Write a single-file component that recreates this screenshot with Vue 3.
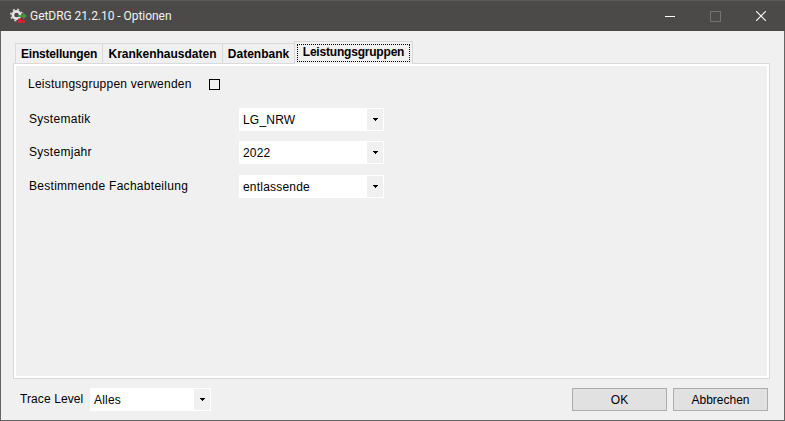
<script setup>
const tabs = [
  { label: 'Einstellungen', width: 87, tight: true },
  { label: 'Krankenhausdaten', width: 120, tight: false },
  { label: 'Datenbank', width: 72, tight: false },
]
const rows = [
  { label: 'Systematik', value: 'LG_NRW' },
  { label: 'Systemjahr', value: '2022' },
  { label: 'Bestimmende Fachabteilung', value: 'entlassende' },
]
</script>

<template>
  <div class="window">
    <header class="titlebar">
      <svg class="appicon" width="20" height="20" viewBox="0 0 20 20">
        <circle cx="6.5" cy="9" r="3.6" fill="none" stroke="#e4e4e4" stroke-width="2.6" />
        <circle cx="6.5" cy="9" r="5.6" fill="none" stroke="#d0d0d0" stroke-width="1.8" stroke-dasharray="2 2.4" />
        <path d="M8 9h5V6.5l4 3.5-4 3.2V11H8z" fill="#3f9a3c" />
        <path d="M8 14h7v3H8z" fill="#c8282c" />
        <path d="M8 12.5h3V14H8z" fill="#c8282c" />
      </svg>
      <span class="title">GetDRG 21.2.10 - Optionen</span>
      <div class="controls">
        <span class="ctl"><i class="min"></i></span>
        <span class="ctl"><i class="max"></i></span>
        <span class="ctl">
          <svg width="10" height="10" viewBox="0 0 10 10"><path d="M0 0l10 10M10 0L0 10" stroke="#fff" stroke-width="1.1" fill="none" /></svg>
        </span>
      </div>
    </header>

    <main class="body">
      <div class="tabs">
        <div
          v-for="t in tabs"
          :key="t.label"
          class="tab"
          :class="{ tight: t.tight }"
          :style="{ width: t.width + 'px' }"
        >{{ t.label }}</div>
        <div class="tab active"><span class="focus">Leistungsgruppen</span></div>
      </div>

      <section class="panel">
        <div class="check-row">
          <span class="check-label">Leistungsgruppen verwenden</span>
          <span class="checkbox"></span>
        </div>
        <div v-for="r in rows" :key="r.label" class="form-row">
          <span class="label">{{ r.label }}</span>
          <div class="select wide">
            <span class="val">{{ r.value }}</span>
            <span class="arrow">
              <svg width="5" height="3" viewBox="0 0 5 3" shape-rendering="crispEdges"><path d="M0 0h5v1H4v1H3v1H2V2H1V1H0z" fill="#000" /></svg>
            </span>
          </div>
        </div>
      </section>

      <footer class="footer">
        <span class="trace">Trace Level</span>
        <div class="select narrow">
          <span class="val">Alles</span>
          <span class="arrow">
            <svg width="5" height="3" viewBox="0 0 5 3" shape-rendering="crispEdges"><path d="M0 0h5v1H4v1H3v1H2V2H1V1H0z" fill="#000" /></svg>
          </span>
        </div>
        <div class="buttons">
          <button class="btn">OK</button>
          <button class="btn">Abbrechen</button>
        </div>
      </footer>
    </main>
  </div>
</template>

<style>
html, body { margin: 0; padding: 0; background: #f0f0f0; overflow: hidden; }
</style>

<style scoped>
.window {
  width: 785px;
  height: 421px;
  box-sizing: border-box;
  display: flex;
  flex-direction: column;
  border: 1px solid #646464;
  border-top: 0;
  background: #f0f0f0;
  font-family: "Liberation Sans", Arial, sans-serif;
  font-size: 12px;
  color: #000;
}
.titlebar {
  height: 31px;
  margin: 0 -1px;
  flex: none;
  display: flex;
  align-items: center;
  background: #4c4a48;
  border-top: 1px solid #5a5a5a;
  box-sizing: border-box;
  padding-left: 10px;
  color: #fff;
}
.appicon { flex: none; }
.title { font-family: Roboto, "Liberation Sans", sans-serif; font-size: 12px; color: #f2f2f2; letter-spacing: -.04px; }
.controls { margin-left: auto; margin-right: 1px; display: flex; height: 100%; }
.ctl { width: 46px; display: flex; align-items: center; justify-content: center; }
.min { width: 10px; height: 1px; background: #fff; display: block; margin-left: 2px; }
.max { width: 9px; height: 9px; border: 1px solid #757371; display: block; }
.body { flex: 1; display: flex; flex-direction: column; padding: 10px 14px 0 12px; min-height: 0; }
.tabs { display: flex; align-items: flex-end; height: 23px; padding-left: 2px; flex: none; position: relative; z-index: 1; margin-bottom: -1px; }
.tab {
  height: 20px;
  box-sizing: border-box;
  border: 1px solid #d9d9d9;
  border-right: 0;
  border-bottom: 0;
  display: flex;
  align-items: center;
  justify-content: center;
  font-weight: bold;
  margin-bottom: 1px;
}
.tab.tight { letter-spacing: -.2px; }
.tab.active {
  height: 23px;
  width: 119px;
  border: 1px solid #d9d9d9;
  border-bottom: 0;
  background: #f0f0f0;
  padding: 2px;
  margin-bottom: 0;
  letter-spacing: -.2px;
}
.focus { flex: 1; height: 100%; border: 1px dotted #000; box-sizing: border-box; display: flex; align-items: center; justify-content: center; padding-bottom: 3px; }
.panel {
  flex: none;
  height: 316px;
  box-sizing: border-box;
  border: 1px solid #d9d9d9;
  box-shadow: inset 0 0 0 2px #fff;
  padding: 9px 0 0 15px;
}
.check-row { display: flex; align-items: center; height: 23px; }
.check-label { width: 181px; margin-left: -1px; letter-spacing: .24px; padding-bottom: 2px; }
.checkbox { width: 11px; height: 11px; box-sizing: border-box; border: 1px solid #000; }
.form-row { display: flex; align-items: center; height: 23px; margin-top: 10px; }
.form-row:last-child { margin-top: 11px; }
.check-row + .form-row { margin-top: 12px; }
.label { width: 210px; letter-spacing: .28px; margin-top: -2px; flex: none; }
.select { height: 23px; box-sizing: border-box; background: #fff; display: flex; align-items: center; justify-content: space-between; padding: 1px; }
.wide { width: 145px; }
.narrow { width: 121px; }
.val { padding-left: 3px; letter-spacing: .2px; }
.arrow { width: 16px; height: 100%; background: #f0f0f0; display: flex; align-items: center; justify-content: center; }
.footer { flex: 1; display: flex; align-items: flex-start; padding-top: 9px; padding-left: 7px; }
.trace { line-height: 23px; width: 70px; letter-spacing: .1px; }
.buttons { margin-left: auto; display: flex; gap: 6px; margin-right: 2px; }
.btn {
  width: 95px;
  height: 23px;
  box-sizing: border-box;
  border: 1px solid #adadad;
  background: #e1e1e1;
  padding: 0;
  font: inherit;
  color: #000;
}
</style>
